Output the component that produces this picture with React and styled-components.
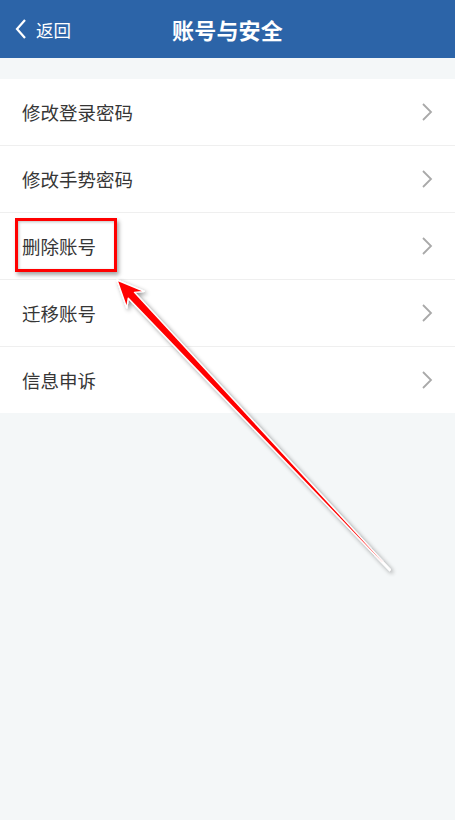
import React from 'react';
import styled, { createGlobalStyle } from 'styled-components';

const GlobalStyle = createGlobalStyle`
  html, body {
    margin: 0;
    padding: 0;
    background: #ffffff;
  }
  body {
    font-family: 'Noto Sans CJK SC', 'Noto Sans', sans-serif;
  }
`;

const Page = styled.div`
  position: relative;
  width: 455px;
  min-height: 820px;
  background: #f4f7f8;
  display: flex;
  flex-direction: column;
`;

const NavBar = styled.div`
  height: 58px;
  background: #2c64a8;
  display: flex;
  align-items: center;
  justify-content: center;
  position: relative;
  color: #ffffff;
`;

const BackButton = styled.div`
  position: absolute;
  left: 15px;
  top: 0;
  bottom: 0;
  display: flex;
  align-items: center;
  gap: 9px;
  font-size: 17.5px;
`;

const Title = styled.div`
  font-size: 22px;
  font-weight: 700;
  letter-spacing: 0.2px;
  padding-bottom: 1px;
`;

const Spacer = styled.div`
  height: 21px;
`;

const List = styled.div`
  background: #ffffff;
  display: flex;
  flex-direction: column;
`;

const Row = styled.div`
  height: 66px;
  display: flex;
  align-items: center;
  justify-content: space-between;
  padding: 0 22px 0 22px;
  border-bottom: ${props => (props.last ? 'none' : '1px solid #efefef')};
  font-size: 18.5px;
  color: #363636;
`;

const RowLabel = styled.span`
  padding-bottom: 1px;
`;

const Highlight = styled.div`
  position: absolute;
  left: 15px;
  top: 218px;
  width: 102px;
  height: 54px;
  box-sizing: border-box;
  border: 3px solid #ff0000;
  box-shadow: 2px 3px 4px rgba(0, 0, 0, 0.35), inset 1px 1px 3px rgba(0, 0, 0, 0.25);
  pointer-events: none;
`;

const ArrowLayer = styled.svg`
  position: absolute;
  left: 0;
  top: 0;
  pointer-events: none;
`;

const items = ['修改登录密码', '修改手势密码', '删除账号', '迁移账号', '信息申诉'];

const Chevron = () => (
  <svg width="12" height="20" viewBox="0 0 12 20">
    <path d="M2 2 L10 10 L2 18" fill="none" stroke="#a9a9a9" strokeWidth="1.8" />
  </svg>
);

const BackIcon = () => (
  <svg width="12" height="22" viewBox="0 0 12 22">
    <path d="M10 2 L2 11 L10 20" fill="none" stroke="#ffffff" strokeWidth="2.2" />
  </svg>
);

// annotation arrow from tail (390,570) to tip (117,280)
const arrowPoints = () => {
  const tip = [117, 280];
  const tail = [390, 570];
  const dx = tip[0] - tail[0];
  const dy = tip[1] - tail[1];
  const len = Math.hypot(dx, dy);
  const u = [dx / len, dy / len];
  const n = [-u[1], u[0]];
  const at = (d, w) => [tip[0] - u[0] * d + n[0] * w, tip[1] - u[1] * d + n[1] * w];
  const pts = [
    tip,
    at(27, 12),
    at(21, 4.2),
    [tail[0] + n[0] * 0.6, tail[1] + n[1] * 0.6],
    [tail[0] - n[0] * 0.6, tail[1] - n[1] * 0.6],
    at(21, -4.2),
    at(27, -12),
  ];
  return pts.map(p => `${p[0].toFixed(1)},${p[1].toFixed(1)}`).join(' ');
};

const App = () => (
  <>
    <GlobalStyle />
    <Page>
      <NavBar>
        <BackButton>
          <BackIcon />
          <span>返回</span>
        </BackButton>
        <Title>账号与安全</Title>
      </NavBar>
      <Spacer />
      <List>
        {items.map((label, i) => (
          <Row key={label} last={i === items.length - 1}>
            <RowLabel>{label}</RowLabel>
            <Chevron />
          </Row>
        ))}
      </List>
      <Highlight />
      <ArrowLayer width="455" height="820" viewBox="0 0 455 820">
        <defs>
          <filter id="shadow" x="-10%" y="-10%" width="120%" height="120%">
            <feDropShadow dx="2" dy="2" stdDeviation="2" floodColor="#000" floodOpacity="0.45" />
          </filter>
        </defs>
        <polygon
          points={arrowPoints()}
          fill="#ff0000"
          stroke="#ffffff"
          strokeWidth="1.4"
          strokeLinejoin="round"
          filter="url(#shadow)"
        />
      </ArrowLayer>
    </Page>
  </>
);

export default App;
